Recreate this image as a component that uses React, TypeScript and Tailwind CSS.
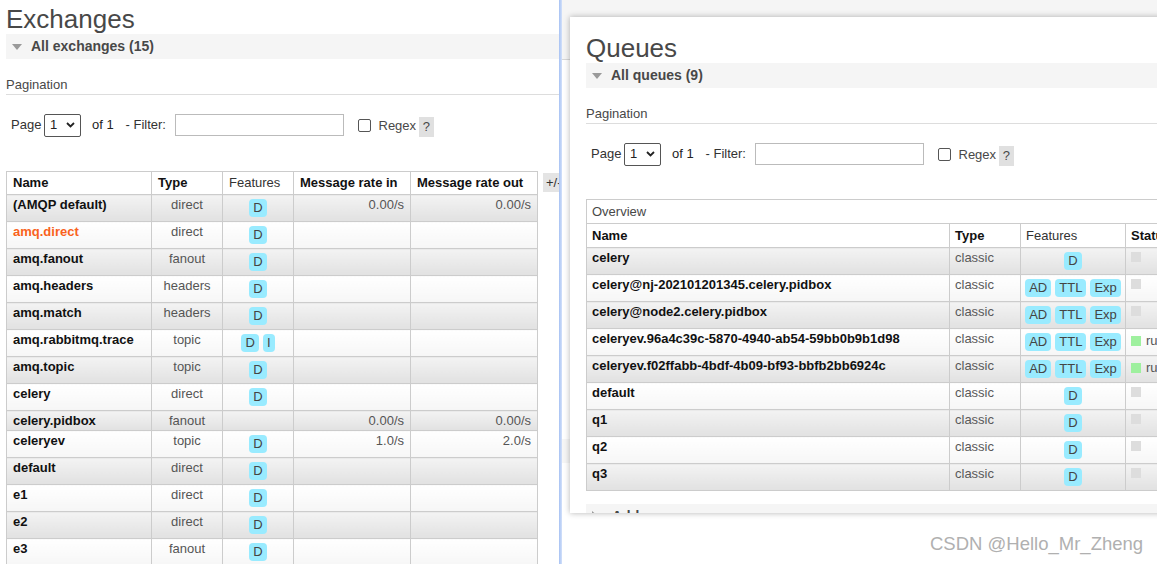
import React from "react";

type Exchange = {
  name: string;
  type: string;
  features: string[];
  rateIn?: string;
  rateOut?: string;
  hot?: boolean;
};

const exchanges: Exchange[] = [
  { name: "(AMQP default)", type: "direct", features: ["D"], rateIn: "0.00/s", rateOut: "0.00/s" },
  { name: "amq.direct", type: "direct", features: ["D"], hot: true },
  { name: "amq.fanout", type: "fanout", features: ["D"] },
  { name: "amq.headers", type: "headers", features: ["D"] },
  { name: "amq.match", type: "headers", features: ["D"] },
  { name: "amq.rabbitmq.trace", type: "topic", features: ["D", "I"] },
  { name: "amq.topic", type: "topic", features: ["D"] },
  { name: "celery", type: "direct", features: ["D"] },
  { name: "celery.pidbox", type: "fanout", features: [], rateIn: "0.00/s", rateOut: "0.00/s" },
  { name: "celeryev", type: "topic", features: ["D"], rateIn: "1.0/s", rateOut: "2.0/s" },
  { name: "default", type: "direct", features: ["D"] },
  { name: "e1", type: "direct", features: ["D"] },
  { name: "e2", type: "direct", features: ["D"] },
  { name: "e3", type: "fanout", features: ["D"] },
];

type Queue = { name: string; features: string[]; running?: boolean };

const queues: Queue[] = [
  { name: "celery", features: ["D"] },
  { name: "celery@nj-202101201345.celery.pidbox", features: ["AD", "TTL", "Exp"] },
  { name: "celery@node2.celery.pidbox", features: ["AD", "TTL", "Exp"] },
  { name: "celeryev.96a4c39c-5870-4940-ab54-59bb0b9b1d98", features: ["AD", "TTL", "Exp"], running: true },
  { name: "celeryev.f02ffabb-4bdf-4b09-bf93-bbfb2bb6924c", features: ["AD", "TTL", "Exp"], running: true },
  { name: "default", features: ["D"] },
  { name: "q1", features: ["D"] },
  { name: "q2", features: ["D"] },
  { name: "q3", features: ["D"] },
];

const grayRow = "bg-linear-to-b from-[#f3f3f3] to-[#e1e1e1]";
const whiteRow = "bg-linear-to-b from-white to-[#f6f6f6]";
const cell = "border border-[#cccccc] align-top pt-[2px] p-0";

function Badge({ t }: { t: string }) {
  return (
    <span className="inline-block h-[18px] rounded-[4px] bg-[#99ebff] px-[4px] text-[13px] leading-[18px] text-[#444]">
      {t}
    </span>
  );
}

function Features({ list }: { list: string[] }) {
  return (
    <div className="mt-[2px] flex justify-center gap-[4px]">
      {list.map((f) => (
        <Badge key={f} t={f} />
      ))}
    </div>
  );
}

function SectionBar({ title }: { title: string }) {
  return (
    <div className="flex h-[25px] items-center bg-[#f5f5f5] pl-[6px]">
      <svg width="10" height="6" viewBox="0 0 10 6" className="mr-[9px]">
        <path d="M0 0 L10 0 L5 6 Z" fill="#9a9a9a" />
      </svg>
      <span className="text-[14px] font-bold text-[#484848]">{title}</span>
    </div>
  );
}

function Pagination() {
  return (
    <>
      <div className="mt-[16px] h-[20px] border-b border-[#dddddd] text-[13px] leading-[19px] text-[#484848]">
        Pagination
      </div>
      <div className="mt-[18px] flex h-[24px] items-center whitespace-nowrap text-[13px] text-[#333]">
        <span className="ml-[5px] w-[33px]">Page</span>
        <div className="flex h-[23px] w-[37px] items-center justify-between rounded-[2px] border border-[#555] bg-white pl-[5px] pr-[5px]">
          <span className="text-[#222]">1</span>
          <svg width="9" height="6" viewBox="0 0 9 6">
            <path d="M1 1 L4.5 4.5 L8 1" stroke="#222" strokeWidth="1.8" fill="none" />
          </svg>
        </div>
        <span className="ml-[11px] w-[33.5px] text-[#222]">of 1</span>
        <span className="w-[49.5px]">- Filter:</span>
        <div className="h-[22px] w-[169px] border border-[#bbbbbb] bg-white" />
        <div className="ml-[14px] h-[13px] w-[13px] rounded-[2px] border border-[#555] bg-white" />
        <span className="ml-[7.5px] mt-[2px] w-[40px] text-[#484848]">Regex</span>
        <span className="mt-[3px] h-[20px] w-[15.5px] bg-[#e0e0e0] text-center leading-[20px] text-[#484848]">?</span>
      </div>
    </>
  );
}

function ExchangesPage() {
  return (
    <div className="h-full w-[559px] shrink-0 overflow-hidden bg-white pl-[6px]">
      <h1 className="pt-[5px] text-[26px] leading-[29px] text-[#484848]">Exchanges</h1>
      <SectionBar title="All exchanges (15)" />
      <Pagination />
      <div className="mt-[34px] flex items-start">
        <table className="w-[531px] table-fixed border-collapse text-[13px] leading-[16px]">
          <colgroup>
            <col className="w-[145px]" />
            <col className="w-[71px]" />
            <col className="w-[71px]" />
            <col className="w-[117px]" />
            <col className="w-[127px]" />
          </colgroup>
          <thead>
            <tr>
              <th className="h-[23px] border border-[#cccccc] px-[6px] pt-[3px] text-left align-top font-bold text-[#111]">Name</th>
              <th className="border border-[#cccccc] px-[6px] pt-[3px] text-left align-top font-bold text-[#111]">Type</th>
              <th className="border border-[#cccccc] px-[6px] pt-[3px] text-left align-top font-normal text-[#333]">Features</th>
              <th className="border border-[#cccccc] px-[6px] pt-[3px] text-left align-top font-bold text-[#111]">Message rate in</th>
              <th className="border border-[#cccccc] px-[6px] pt-[3px] text-left align-top font-bold text-[#111]">Message rate out</th>
            </tr>
          </thead>
          <tbody>
            {exchanges.map((e, i) => {
              const bg = i % 2 === 0 ? grayRow : whiteRow;
              const h = e.features.length ? "h-[27px]" : "h-[20px]";
              return (
                <tr key={e.name}>
                  <td className={`${cell} ${bg} ${h} px-[6px] font-bold ${e.hot ? "text-[#f9621c]" : "text-[#111]"}`}>
                    {e.name}
                  </td>
                  <td className={`${cell} ${bg} px-[6px] text-center text-[#555]`}>{e.type}</td>
                  <td className={`${cell} ${bg}`}>{e.features.length > 0 && <Features list={e.features} />}</td>
                  <td className={`${cell} ${bg} px-[6px] text-right text-[#555]`}>{e.rateIn}</td>
                  <td className={`${cell} ${bg} px-[6px] text-right text-[#555]`}>{e.rateOut}</td>
                </tr>
              );
            })}
          </tbody>
        </table>
        <span className="ml-[5px] mt-[2px] h-[19px] w-[24px] shrink-0 bg-[#e4e4e4] pl-[3px] text-[13px] leading-[19px] text-[#333]">
          +/-
        </span>
      </div>
    </div>
  );
}

function QueuesWindow() {
  return (
    <div className="absolute left-[8px] top-[17px] h-[496px] w-[640px] overflow-hidden bg-white pl-[16px] pt-[17px] shadow-[0_0_6px_rgba(0,0,0,0.3)]">
      <h1 className="text-[26px] leading-[29px] text-[#484848]">Queues</h1>
      <SectionBar title="All queues (9)" />
      <Pagination />
      <table className="mt-[33px] w-[660px] table-fixed border-collapse text-[13px] leading-[16px]">
        <colgroup>
          <col className="w-[363px]" />
          <col className="w-[71px]" />
          <col className="w-[105px]" />
          <col className="w-[121px]" />
        </colgroup>
        <thead>
          <tr>
            <th colSpan={4} className="h-[24px] border border-[#cccccc] bg-white px-[5px] pt-[4px] text-left align-top font-normal text-[#484848]">
              Overview
            </th>
          </tr>
          <tr>
            <th className="h-[24px] border border-[#cccccc] px-[5px] pt-[4px] text-left align-top font-bold text-[#111]">Name</th>
            <th className="border border-[#cccccc] px-[5px] pt-[4px] text-left align-top font-bold text-[#111]">Type</th>
            <th className="border border-[#cccccc] px-[5px] pt-[4px] text-left align-top font-normal text-[#333]">Features</th>
            <th className="border border-[#cccccc] px-[5px] pt-[4px] text-left align-top font-bold text-[#111]">Status</th>
          </tr>
        </thead>
        <tbody>
          {queues.map((q, i) => {
            const bg = i % 2 === 0 ? grayRow : whiteRow;
            return (
              <tr key={q.name}>
                <td className={`${cell} ${bg} h-[27px] px-[5px] font-bold text-[#111]`}>{q.name}</td>
                <td className={`${cell} ${bg} px-[5px] text-[#595959]`}>classic</td>
                <td className={`${cell} ${bg}`}>
                  <Features list={q.features} />
                </td>
                <td className={`${cell} ${bg} px-[5px]`}>
                  <div className="mt-[2px] flex items-center gap-[5px]">
                    <span className={`h-[10px] w-[10px] ${q.running ? "bg-[#9ef09e]" : "bg-[#dddddd]"}`} />
                    {q.running && <span className="text-[#555]">running</span>}
                  </div>
                </td>
              </tr>
            );
          })}
        </tbody>
      </table>
      {/* collapsed section, only its top edge shows above the window bottom */}
      <div className="mt-[13px] flex h-[25px] items-start bg-[#f5f5f5] pl-[6px] pt-[4px]">
        <svg width="6" height="10" viewBox="0 0 6 10" className="mr-[14px] mt-[3px]">
          <path d="M0 0 L6 5 L0 10 Z" fill="#9a9a9a" />
        </svg>
        <span className="text-[14px] font-bold leading-[16px] text-[#484848]">Add a new queue</span>
      </div>
    </div>
  );
}

export default function App() {
  return (
    <div className="flex h-[564px] w-[1157px] overflow-hidden bg-white font-['Liberation_Sans',Arial,sans-serif]">
      <ExchangesPage />
      <div className="h-full w-[3px] shrink-0 bg-linear-to-r from-[#a6c1f3] to-[#d3e1fa]" />
      <div className="relative flex-1">
        {/* page behind the floating window */}
        <div className="h-[60px] border-b border-[#d8d8d8] bg-[#f5f5f5]" />
        <div className="mt-[379px] h-[24px] bg-[#f6f6f6]" />
        <QueuesWindow />
        <div className="absolute left-[368px] top-[531px] text-[18.5px] leading-[26px] text-[#b0b0b0] [text-shadow:0_0_1px_#ffffff]">
          CSDN @Hello_Mr_Zheng
        </div>
      </div>
    </div>
  );
}
